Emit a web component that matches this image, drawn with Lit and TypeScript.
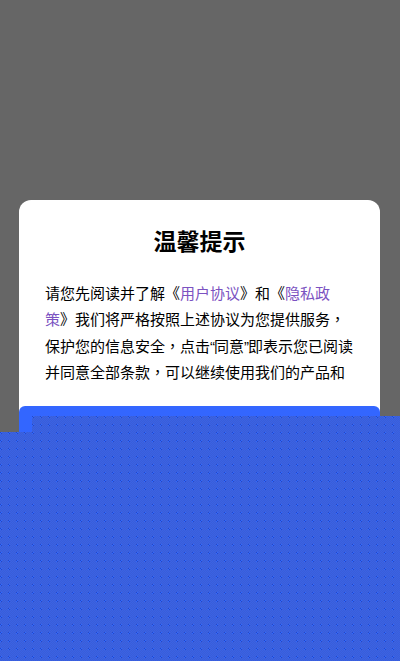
import { LitElement, html, css } from "lit";
import { customElement } from "lit/decorators.js";

@customElement("app-root")
export class AppRoot extends LitElement {
  static styles = css`
    :host { display: block; }
    .page {
      position: relative; width: 400px; height: 661px; overflow: hidden;
      background: #666; display: flex; flex-direction: column; align-items: center;
      padding-top: 200px; box-sizing: border-box;
      font-family: "Noto Sans CJK SC", "Liberation Sans", sans-serif;
    }
    .card {
      width: 361px; margin-left: -1px; background: #fff; border-radius: 12px; flex: 1;
      display: flex; flex-direction: column; color: #000;
    }
    .title { margin: 0; padding-top: 24px; text-align: center; font-size: 23px; line-height: 32px; font-weight: 700; }
    .body {
      margin: 0; padding: 24px 23px 0 26px; font-size: 15px; line-height: 26.3px; height: 126px;
      text-spacing-trim: space-all; font-kerning: none;
    }
    .comma { font-family: "Noto Sans CJK TC", sans-serif; line-height: 0; }
    .q { font-family: "Liberation Sans", sans-serif; letter-spacing: -1px; line-height: 0; }
    .link { color: #7b52c1; }
    .btn { flex: 1; background: #3366ff; border-radius: 6px; }
    .over { position: absolute; left: 0; top: 0; width: 400px; height: 661px; display: block; }
  `;
  render() {
    return html`<div class="page">
      <div class="card">
        <h1 class="title">温馨提示</h1>
        <p class="body">请您先阅读并了解《<span class="link">用户协议</span>》和《<span class="link">隐私政策</span>》我们将严格按照上述协议为您提供服务<span class="comma">，</span>保护您的信息安全<span class="comma">，</span>点击<span class="q">“</span>同意<span class="q">”</span>即表示您已阅读并同意全部条款<span class="comma">，</span>可以继续使用我们的产品和</p>
        <div class="btn"></div>
      </div>
      <svg class="over" viewBox="0 0 400 661" shape-rendering="crispEdges">
        <defs>
          <pattern id="dither" x="0" y="0" width="8" height="8" patternUnits="userSpaceOnUse">
            <rect width="8" height="8" fill="#3a62e4"></rect>
            <path d="M1 0h1v1h-1zM3 0h1v1h-1zM5 0h1v1h-1zM7 0h1v1h-1zM0 1h1v1h-1zM2 1h1v1h-1zM4 1h1v1h-1zM6 1h1v1h-1zM1 2h1v1h-1zM3 2h1v1h-1zM5 2h1v1h-1zM7 2h1v1h-1zM0 3h1v1h-1zM2 3h1v1h-1zM4 3h1v1h-1zM6 3h1v1h-1zM1 4h1v1h-1zM3 4h1v1h-1zM5 4h1v1h-1zM7 4h1v1h-1zM0 5h1v1h-1zM2 5h1v1h-1zM4 5h1v1h-1zM6 5h1v1h-1zM1 6h1v1h-1zM3 6h1v1h-1zM5 6h1v1h-1zM7 6h1v1h-1zM0 7h1v1h-1zM2 7h1v1h-1zM4 7h1v1h-1zM6 7h1v1h-1z" fill="#3a5ed8"></path>
            <rect x="0" y="0" width="1" height="1" fill="#2846c4"></rect>
            <rect x="1" y="0" width="1" height="1" fill="#2f6bff"></rect>
            <rect x="0" y="1" width="1" height="1" fill="#2f6bff"></rect>
            <rect x="1" y="1" width="1" height="1" fill="#2846c4"></rect>
          </pattern>
        </defs>
        <polygon points="32,416 400,416 400,661 0,661 0,432 32,432" fill="url(#dither)"></polygon>
      </svg>
    </div>`;
  }
}
